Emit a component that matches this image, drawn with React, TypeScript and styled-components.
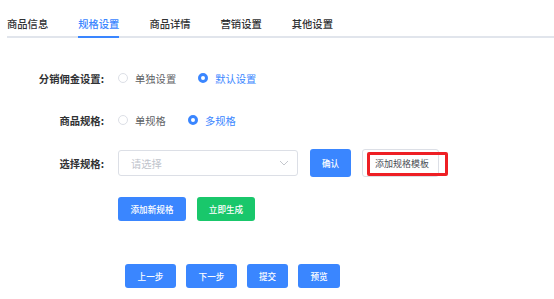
import styled, { createGlobalStyle } from "styled-components";

const GlobalStyle = createGlobalStyle`
  body {
    margin: 0;
    background: #ffffff;
    font-family: "Noto Sans CJK SC", "Noto Sans", sans-serif;
  }
`;

const BLUE = "#3a86ff";
const GREEN = "#19c76b";

const tabs = ["商品信息", "规格设置", "商品详情", "营销设置", "其他设置"];
const footer = [
  { text: "上一步", w: 51 },
  { text: "下一步", w: 51 },
  { text: "提交", w: 41 },
  { text: "预览", w: 42 },
];

const App = () => {
  return (
    <Page>
      <GlobalStyle />
      <TabBar>
        {tabs.map((t, i) => (
          <Tab key={t} $active={i === 1}>
            {t}
          </Tab>
        ))}
      </TabBar>
      <Form>
        <Row $mb={14}>
          <Label>分销佣金设置:</Label>
          <Field>
            <RadioGroup>
              <RadioItem>
                <Radio />
                <RadioText>单独设置</RadioText>
              </RadioItem>
              <RadioItem>
                <Radio $checked />
                <RadioText $checked>默认设置</RadioText>
              </RadioItem>
            </RadioGroup>
          </Field>
        </Row>
        <Row $mb={15}>
          <Label>商品规格:</Label>
          <Field>
            <RadioGroup>
              <RadioItem>
                <Radio />
                <RadioText>单规格</RadioText>
              </RadioItem>
              <RadioItem>
                <Radio $checked />
                <RadioText $checked>多规格</RadioText>
              </RadioItem>
            </RadioGroup>
          </Field>
        </Row>
        <Row $mb={18}>
          <Label>选择规格:</Label>
          <Field>
            <Select>
              <Placeholder>请选择</Placeholder>
              <svg width="10" height="6" viewBox="0 0 10 6">
                <path d="M1 1l4 4 4-4" fill="none" stroke="#c5c8ce" strokeWidth="1" />
              </svg>
            </Select>
            <Button $color={BLUE} $w={41} $h={28} $ml={12}>
              确认
            </Button>
            <TemplateWrap>
              <GhostButton>添加规格模板</GhostButton>
              <Highlight />
            </TemplateWrap>
          </Field>
        </Row>
        <Row $mb={41}>
          <Label />
          <Field>
            <Button $color={BLUE} $w={68} $h={24}>
              添加新规格
            </Button>
            <Button $color={GREEN} $w={58} $h={24} $ml={11}>
              立即生成
            </Button>
          </Field>
        </Row>
        <Footer>
          {footer.map((b) => (
            <Button key={b.text} $color={BLUE} $w={b.w} $h={24}>
              {b.text}
            </Button>
          ))}
        </Footer>
      </Form>
    </Page>
  );
};

export default App;

const Page = styled.div`
  width: 554px;
  height: 299px;
  overflow: hidden;
`;
const TabBar = styled.div`
  margin-left: 7px;
  display: flex;
  gap: 30px;
  border-bottom: 2px solid #e1e5ec;
`;
const Tab = styled.div<{ $active?: boolean }>`
  position: relative;
  font-size: 10.3px;
  line-height: 14px;
  padding: 17px 0 5px;
  font-weight: 500;
  color: ${(p) => (p.$active ? BLUE : "#303133")};
  &::after {
    content: "";
    position: absolute;
    left: 0;
    right: 0;
    bottom: -2px;
    height: 2px;
    background: ${(p) => (p.$active ? BLUE : "transparent")};
  }
`;
const Form = styled.div`
  padding-top: 26px;
`;
const Row = styled.div<{ $mb: number }>`
  display: flex;
  align-items: center;
  min-height: 28px;
  margin-bottom: ${(p) => p.$mb}px;
`;
const Label = styled.div`
  width: 104px;
  text-align: right;
  font-size: 10.3px;
  font-weight: 700;
  color: #303133;
`;
const Field = styled.div`
  margin-left: 14px;
  display: flex;
  align-items: center;
`;
const RadioGroup = styled.div`
  display: flex;
  gap: 22px;
`;
const RadioItem = styled.div`
  display: flex;
  align-items: center;
  gap: 7px;
`;
const Radio = styled.span<{ $checked?: boolean }>`
  box-sizing: border-box;
  width: 10px;
  height: 10px;
  border-radius: 50%;
  border: ${(p) => (p.$checked ? `3.5px solid ${BLUE}` : "1px solid #dcdfe6")};
  background: #fff;
`;
const RadioText = styled.span<{ $checked?: boolean }>`
  font-size: 10.3px;
  color: ${(p) => (p.$checked ? BLUE : "#606266")};
`;
const Select = styled.div`
  box-sizing: border-box;
  width: 180px;
  height: 26px;
  border: 1px solid #dcdfe6;
  border-radius: 3px;
  display: flex;
  align-items: center;
  justify-content: space-between;
  padding: 0 8px 0 12px;
`;
const Placeholder = styled.span`
  font-size: 10.3px;
  color: #c0c4cc;
`;
const Button = styled.div<{ $color: string; $w: number; $h: number; $ml?: number }>`
  width: ${(p) => p.$w}px;
  height: ${(p) => p.$h}px;
  margin-left: ${(p) => p.$ml ?? 0}px;
  background: ${(p) => p.$color};
  border-radius: 3px;
  color: #fff;
  font-size: 8.6px;
  font-weight: 500;
  display: flex;
  align-items: center;
  justify-content: center;
`;
const TemplateWrap = styled.div`
  position: relative;
  margin-left: 11px;
`;
const GhostButton = styled.div`
  box-sizing: border-box;
  width: 77px;
  height: 28px;
  border: 1px solid #dcdfe6;
  border-radius: 3px;
  font-size: 9px;
  color: #4a4d55;
  display: flex;
  align-items: center;
  padding-left: 12px;
`;
const Highlight = styled.div`
  position: absolute;
  left: 5px;
  top: 3px;
  width: 81px;
  height: 24px;
  box-sizing: border-box;
  border: 3px solid #ee1f24;
  border-radius: 2px;
`;
const Footer = styled.div`
  display: flex;
  gap: 10px;
  padding-left: 125px;
`;
